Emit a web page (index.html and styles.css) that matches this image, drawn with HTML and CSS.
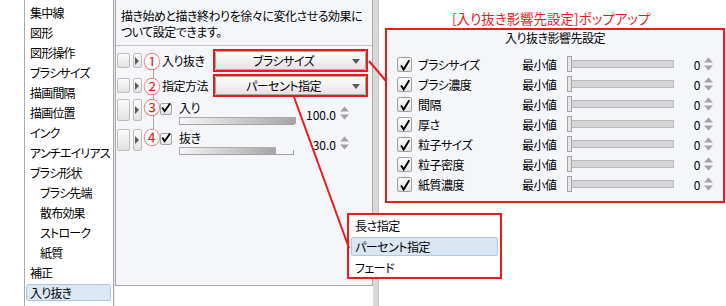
FILE: index.html
```html
<!DOCTYPE html>
<html lang="ja">

<head>
    <meta charset="UTF-8">
    <title>入り抜き</title>
    <link rel="stylesheet" href="styles.css">
</head>

<body>

    <div class="screen">
        <ul class="nav">
            <li class="nav-item">集中線</li>
            <li class="nav-item">図形</li>
            <li class="nav-item">図形操作</li>
            <li class="nav-item">ブラシサイズ</li>
            <li class="nav-item">描画間隔</li>
            <li class="nav-item">描画位置</li>
            <li class="nav-item">インク</li>
            <li class="nav-item">アンチエイリアス</li>
            <li class="nav-item">ブラシ形状</li>
            <li class="nav-item sub">ブラシ先端</li>
            <li class="nav-item sub">散布効果</li>
            <li class="nav-item sub">ストローク</li>
            <li class="nav-item sub">紙質</li>
            <li class="nav-item">補正</li>
            <li class="nav-item selected">入り抜き</li>
        </ul>
        <div class="split"></div>

        <div class="panel">
            <p class="desc">描き始めと描き終わりを徐々に変化させる効果に<br>ついて設定できます。</p>

            <div class="ctl-list">
                <div class="ctl-row">
                    <span class="btn-a"></span>
                    <span class="btn-b"></span>
                    <span class="num">①</span>
                    <span class="ctl-label">入り抜き</span>
                    <div class="callout">
                        <div class="select"><span class="select-text">ブラシサイズ</span><i class="caret"></i></div>
                    </div>
                </div>
                <div class="ctl-row">
                    <span class="btn-a"></span>
                    <span class="btn-b"></span>
                    <span class="num">②</span>
                    <span class="ctl-label">指定方法</span>
                    <div class="callout">
                        <div class="select"><span class="select-text">パーセント指定</span><i class="caret"></i></div>
                    </div>
                </div>
                <div class="slide-row">
                    <span class="btn-a tall"></span>
                    <span class="btn-b tall"></span>
                    <span class="num">③</span>
                    <div class="slide-body">
                        <span class="check small"><svg width="12" height="12" viewBox="0 0 12 12"><path d="M2.5 5.5 L5 9.5 L11 1" fill="none" stroke="#000" stroke-width="2"/></svg></span>
                        <span class="slide-label">入り</span>
                        <div class="bar"><div class="bar-fill" style="width: 100%;"></div></div>
                        <span class="value">100.0</span>
                        <span class="spin"><svg width="9" height="16" viewBox="0 0 9 16"><path d="M0 6.5 L4.5 1.5 L9 6.5Z M0 9.5 L4.5 14.5 L9 9.5Z" fill="#a3a3a3"/></svg></span>
                    </div>
                </div>
                <div class="slide-row">
                    <span class="btn-a tall"></span>
                    <span class="btn-b tall"></span>
                    <span class="num">④</span>
                    <div class="slide-body">
                        <span class="check small"><svg width="12" height="12" viewBox="0 0 12 12"><path d="M2.5 5.5 L5 9.5 L11 1" fill="none" stroke="#000" stroke-width="2"/></svg></span>
                        <span class="slide-label">抜き</span>
                        <div class="bar"><div class="bar-fill" style="width: 83%;"></div></div>
                        <span class="value">30.0</span>
                        <span class="spin"><svg width="9" height="16" viewBox="0 0 9 16"><path d="M0 6.5 L4.5 1.5 L9 6.5Z M0 9.5 L4.5 14.5 L9 9.5Z" fill="#a3a3a3"/></svg></span>
                    </div>
                </div>
            </div>
        </div>
        <div class="strip"></div>
    </div>

    <p class="popup-caption">[入り抜き影響先設定]ポップアップ</p>

    <div class="popup">
        <div class="popup-title">入り抜き影響先設定</div>
        <div class="popup-rows">
            <div class="p-row"><span class="check"><svg width="15" height="15" viewBox="0 0 15 15"><path d="M3.5 7.5 L6.5 12 L13 1.5" fill="none" stroke="#000" stroke-width="2.2"/></svg></span><span class="p-label">ブラシサイズ</span><span class="p-min">最小値</span><span class="track"><i class="thumb"></i></span><span class="p-val">0</span><span class="spin"><svg width="9" height="16" viewBox="0 0 9 16"><path d="M0 6.5 L4.5 1.5 L9 6.5Z M0 9.5 L4.5 14.5 L9 9.5Z" fill="#a3a3a3"/></svg></span></div>
            <div class="p-row"><span class="check"><svg width="15" height="15" viewBox="0 0 15 15"><path d="M3.5 7.5 L6.5 12 L13 1.5" fill="none" stroke="#000" stroke-width="2.2"/></svg></span><span class="p-label">ブラシ濃度</span><span class="p-min">最小値</span><span class="track"><i class="thumb"></i></span><span class="p-val">0</span><span class="spin"><svg width="9" height="16" viewBox="0 0 9 16"><path d="M0 6.5 L4.5 1.5 L9 6.5Z M0 9.5 L4.5 14.5 L9 9.5Z" fill="#a3a3a3"/></svg></span></div>
            <div class="p-row"><span class="check"><svg width="15" height="15" viewBox="0 0 15 15"><path d="M3.5 7.5 L6.5 12 L13 1.5" fill="none" stroke="#000" stroke-width="2.2"/></svg></span><span class="p-label">間隔</span><span class="p-min">最小値</span><span class="track"><i class="thumb"></i></span><span class="p-val">0</span><span class="spin"><svg width="9" height="16" viewBox="0 0 9 16"><path d="M0 6.5 L4.5 1.5 L9 6.5Z M0 9.5 L4.5 14.5 L9 9.5Z" fill="#a3a3a3"/></svg></span></div>
            <div class="p-row"><span class="check"><svg width="15" height="15" viewBox="0 0 15 15"><path d="M3.5 7.5 L6.5 12 L13 1.5" fill="none" stroke="#000" stroke-width="2.2"/></svg></span><span class="p-label">厚さ</span><span class="p-min">最小値</span><span class="track"><i class="thumb"></i></span><span class="p-val">0</span><span class="spin"><svg width="9" height="16" viewBox="0 0 9 16"><path d="M0 6.5 L4.5 1.5 L9 6.5Z M0 9.5 L4.5 14.5 L9 9.5Z" fill="#a3a3a3"/></svg></span></div>
            <div class="p-row"><span class="check"><svg width="15" height="15" viewBox="0 0 15 15"><path d="M3.5 7.5 L6.5 12 L13 1.5" fill="none" stroke="#000" stroke-width="2.2"/></svg></span><span class="p-label">粒子サイズ</span><span class="p-min">最小値</span><span class="track"><i class="thumb"></i></span><span class="p-val">0</span><span class="spin"><svg width="9" height="16" viewBox="0 0 9 16"><path d="M0 6.5 L4.5 1.5 L9 6.5Z M0 9.5 L4.5 14.5 L9 9.5Z" fill="#a3a3a3"/></svg></span></div>
            <div class="p-row"><span class="check"><svg width="15" height="15" viewBox="0 0 15 15"><path d="M3.5 7.5 L6.5 12 L13 1.5" fill="none" stroke="#000" stroke-width="2.2"/></svg></span><span class="p-label">粒子密度</span><span class="p-min">最小値</span><span class="track"><i class="thumb"></i></span><span class="p-val">0</span><span class="spin"><svg width="9" height="16" viewBox="0 0 9 16"><path d="M0 6.5 L4.5 1.5 L9 6.5Z M0 9.5 L4.5 14.5 L9 9.5Z" fill="#a3a3a3"/></svg></span></div>
            <div class="p-row"><span class="check"><svg width="15" height="15" viewBox="0 0 15 15"><path d="M3.5 7.5 L6.5 12 L13 1.5" fill="none" stroke="#000" stroke-width="2.2"/></svg></span><span class="p-label">紙質濃度</span><span class="p-min">最小値</span><span class="track"><i class="thumb"></i></span><span class="p-val">0</span><span class="spin"><svg width="9" height="16" viewBox="0 0 9 16"><path d="M0 6.5 L4.5 1.5 L9 6.5Z M0 9.5 L4.5 14.5 L9 9.5Z" fill="#a3a3a3"/></svg></span></div>
        </div>
    </div>

    <ul class="menu">
        <li class="menu-item">長さ指定</li>
        <li class="menu-item active">パーセント指定</li>
        <li class="menu-item">フェード</li>
    </ul>

    <svg class="leaders" width="726" height="306" viewBox="0 0 726 306">
        <line x1="369" y1="61" x2="386" y2="81" stroke="#ee1a1a" stroke-width="2"/>
        <line x1="294" y1="97" x2="349" y2="248" stroke="#ee1a1a" stroke-width="2"/>
    </svg>

</body>

</html>
```

FILE: styles.css
```css
body {
    margin: 0;
    width: 726px;
    height: 306px;
    overflow: hidden;
    position: relative;
    background: #fff;
    font-family: "Noto Sans CJK JP", "Liberation Sans", sans-serif;
    font-size: 12px;
    color: #000;
    font-feature-settings: "palt";
    letter-spacing: -0.5px;
}

.screen {
    display: flex;
    align-items: flex-start;
    padding-left: 24px;
    height: 306px;
}

/* left category list */
.nav {
    list-style: none;
    margin: 0;
    padding: 3px 0 0 0;
    width: 88px;
    height: 303px;
    border-left: 1px solid #a9a9a9;
    border-right: 1px solid #a9a9a9;
    background: #fff;
    letter-spacing: -0.8px;
}

.nav-item {
    height: 20px;
    line-height: 20px;
    padding-left: 5px;
    white-space: nowrap;
}

.nav-item.sub {
    padding-left: 15px;
}

.nav-item.selected {
    height: 15px;
    line-height: 15px;
    margin: 1px 2px 3px 1px;
    padding-left: 3px;
    background: #dbe7f3;
    border: 1px solid #aac6df;
    border-radius: 3px;
}

.split {
    width: 1px;
    height: 306px;
    background: #e6e6e6;
}

/* settings panel */
.panel {
    width: 256px;
    height: 285px;
    border-left: 1px solid #a9a9a9;
    border-right: 1px solid #a9a9a9;
    border-bottom: 1px solid #a9a9a9;
    background: #f4f6fa;
}

.desc {
    margin: 0;
    padding: 8px 0 5px 5px;
    line-height: 16px;
    border-bottom: 1px solid #c6c6c6;
    white-space: nowrap;
}

.ctl-list {
    position: relative;
    padding-top: 2px;
}

.ctl-list::before {
    content: "";
    position: absolute;
    left: 37px;
    top: 16px;
    height: 80px;
    border-left: 1px solid #a8a8a8;
}

.ctl-row {
    display: flex;
    align-items: center;
    height: 25px;
}

.btn-a,
.btn-b {
    height: 13px;
    border: 1px solid #bdbdbd;
    border-radius: 2px;
    background: linear-gradient(#fbfbfb, #e2e2e2);
    box-sizing: content-box;
}

.btn-a {
    width: 11px;
    margin-left: 1px;
}

.btn-b {
    width: 7px;
    margin-left: 3px;
    display: flex;
    align-items: center;
}

.btn-b::before {
    content: "";
    border-top: 4px solid transparent;
    border-bottom: 4px solid transparent;
    border-left: 4px solid #5c5c5c;
    margin-left: 1px;
}

.btn-a.tall,
.btn-b.tall {
    height: 20px;
    margin-top: 1px;
}

.num {
    display: flex;
    align-items: center;
    justify-content: center;
    width: 16px;
    height: 16px;
    margin-left: 2px;
    border-radius: 50%;
    background: #fff;
    color: #ee1a1a;
    font-size: 17px;
    line-height: 16px;
    letter-spacing: 0;
    position: relative;
}

.ctl-label {
    width: 51px;
    margin-left: 2px;
    white-space: nowrap;
}

.callout {
    width: 151px;
    height: 19px;
    border: 2px solid #ee1a1a;
    padding: 0;
}

.select {
    display: flex;
    align-items: center;
    height: 17px;
    margin: 0;
    border: 1px solid #a7a7a7;
    border-radius: 2px;
    background: linear-gradient(#fdfdfd, #e4e4e4);
}

.select-text {
    flex: 1;
    text-align: center;
}

.caret {
    width: 0;
    height: 0;
    border-left: 4px solid transparent;
    border-right: 4px solid transparent;
    border-top: 5px solid #5a5a5a;
    margin: 1px 5px 0 1px;
}

.slide-row {
    display: flex;
    align-items: flex-start;
    height: 30px;
}

.slide-row .num {
    margin-top: 1px;
}

.slide-body {
    display: grid;
    grid-template-columns: 19px 115px 42px 13px;
    grid-template-rows: 16px 10px;
    padding-top: 2px;
}

.check {
    display: flex;
    width: 13px;
    height: 13px;
    border: 1px solid #a3a3a3;
    border-radius: 2px;
    background: linear-gradient(#ffffff, #e3e3e3);
}

.check.small {
    width: 10px;
    height: 10px;
    align-self: center;
    margin-top: 2px;
}

.check.small svg {
    margin: -2px 0 0 -1px;
}

.slide-label {
    grid-column: 2;
    line-height: 16px;
}

.bar {
    grid-column: 2;
    grid-row: 2;
    align-self: center;
    height: 7px;
    border-bottom: 1px solid #a0a0a0;
    position: relative;
}

.bar::after {
    content: "";
    position: absolute;
    right: 0;
    bottom: 0;
    width: 1px;
    height: 4px;
    background: #a0a0a0;
}

.bar-fill {
    height: 6px;
    border: 1px solid #ababab;
    border-bottom: none;
    background: linear-gradient(to right, #f6f6f6, #a5a5a5);
}

.value {
    grid-column: 3;
    grid-row: 1 / 3;
    align-self: center;
    text-align: right;
    margin-top: 3px;
    letter-spacing: 0;
}

.slide-body .spin {
    grid-column: 4;
    grid-row: 1 / 3;
    align-self: center;
    padding-left: 4px;
}

.spin {
    display: flex;
}

.strip {
    width: 5px;
    height: 306px;
    background: #d9d9d9;
    border-right: 1px solid #c9c9c9;
}

/* annotation callouts */
.popup-caption {
    position: absolute;
    left: 452px;
    top: 9px;
    margin: 0;
    color: #ee1a1a;
    font-size: 13.5px;
    line-height: 18px;
    letter-spacing: 0;
    white-space: nowrap;
}

.popup {
    position: absolute;
    left: 385px;
    top: 28px;
    width: 336px;
    height: 171px;
    border: 2px solid #ee1a1a;
    background: #f4f6fa;
}

.popup-title {
    text-align: center;
    line-height: 16px;
    margin-bottom: 8px;
}

.popup-rows {
    padding-left: 10px;
}

.p-row {
    display: flex;
    align-items: center;
    height: 20px;
}

.p-label {
    width: 104px;
    margin-left: 6px;
    white-space: nowrap;
}

.p-min {
    width: 46px;
}

.track {
    display: flex;
    align-items: center;
    width: 104px;
    height: 6px;
    border: 1px solid #bcbcbc;
    background: #d5d5d5;
}

.thumb {
    width: 3px;
    height: 14px;
    margin-left: -2px;
    border: 1px solid #a5a5a5;
    background: #e6e6e6;
}

.p-val {
    width: 26px;
    text-align: right;
}

.p-row .spin {
    margin-left: 4px;
}

.menu {
    position: absolute;
    left: 347px;
    top: 213px;
    width: 151px;
    height: 61px;
    margin: 0;
    padding: 1px 0 0 0;
    list-style: none;
    border: 2px solid #ee1a1a;
    background: #fff;
}

.menu-item {
    height: 20px;
    line-height: 20px;
    padding-left: 6px;
}

.menu-item.active {
    height: 17px;
    line-height: 17px;
    margin: 1px 2px 2px 2px;
    padding-left: 3px;
    background: #dae6f2;
    border: 1px solid #b3cade;
    border-radius: 2px;
}

.leaders {
    position: absolute;
    left: 0;
    top: 0;
    pointer-events: none;
}
```
